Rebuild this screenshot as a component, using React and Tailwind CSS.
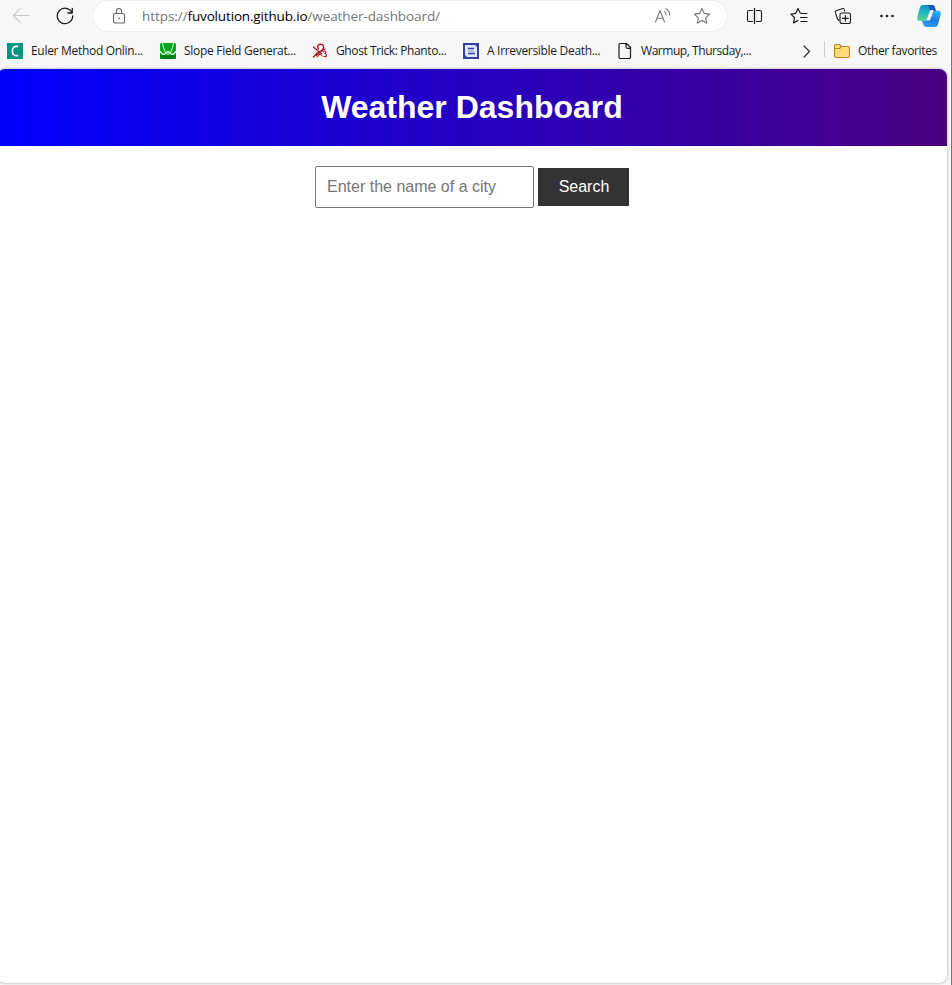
import React from "react";

const UI = "font-['Open_Sans','Noto_Sans',sans-serif]";

function Icon({ className = "", children, w = 20, h = 20 }) {
  return (
    <svg
      className={`shrink-0 ${className}`}
      width={w}
      height={h}
      viewBox={`0 0 ${w} ${h}`}
      fill="none"
      stroke="currentColor"
      strokeWidth="1.1"
      strokeLinecap="round"
      strokeLinejoin="round"
    >
      {children}
    </svg>
  );
}

function AddressBar() {
  return (
    <div className="ml-[18px] flex h-[30px] w-[634px] shrink-0 items-center rounded-full bg-white shadow-[0_0_2px_rgba(0,0,0,0.12)]">
      <Icon className="ml-4 text-[#666]">
        <path d="M6 7.500h8a1.500 1.500 0 0 1 1.500 1.500v6.500A1.500 1.500 0 0 1 14 17H6a1.500 1.500 0 0 1-1.500-1.500V9A1.500 1.500 0 0 1 6 7.500ZM7.500 7.500V5a2.500 2.500 0 0 1 5 0v2.500" />
        <circle cx="10" cy="12.3" r="0.9" fill="currentColor" stroke="none" />
      </Icon>
      <div className={`ml-[13px] w-[299px] whitespace-nowrap text-[13.5px] leading-5 text-[#767676] ${UI}`}>
        <span className="tracking-[-0.06px]">https://</span>
        <span className="tracking-[-0.16px] text-black">fuvolution.github.io</span>
        <span className="tracking-[-0.08px]">/weather-dashboard/</span>
      </div>
      <Icon className="ml-[212px] text-[#777]">
        <path d="M2.500 16 7 4.500 11.500 16M4 12.200h6M11.500 5.600c1 .7 1.600 1.900 1.500 3.400M13 2.700c2.300 1.200 3.600 3.400 3.600 6.300" />
      </Icon>
      <Icon className="ml-[19px] text-[#777]">
        <path d="m10 2.500 2.300 4.900 5.300.7-3.900 3.700 1 5.300-4.700-2.600-4.700 2.600 1-5.300-3.900-3.700 5.300-.7z" />
      </Icon>
    </div>
  );
}

function Copilot() {
  return (
    <svg className="ml-[19px] shrink-0" width="26" height="26" viewBox="0 0 26 26">
      <defs>
        <linearGradient id="cpLeft" x1="0.5" y1="0" x2="0.35" y2="1">
          <stop offset="0" stopColor="#1687c9" />
          <stop offset="0.45" stopColor="#20b4c0" />
          <stop offset="1" stopColor="#58d68c" />
        </linearGradient>
        <linearGradient id="cpRight" x1="0.7" y1="0" x2="0.3" y2="1">
          <stop offset="0" stopColor="#24b8f2" />
          <stop offset="0.5" stopColor="#2478e6" />
          <stop offset="1" stopColor="#2d9cf4" />
        </linearGradient>
      </defs>
      <path d="M7.500 2H16c1.500 0 2.300.9 2.800 2.200l1.200 3.600h-3.800c-1.600 0-2.500.8-3 2.300l-2.200 5.700c-.5 1.400-1.300 2.200-3 2.200H4.200C1.700 18 .7 16.500 1.200 14.400L3.700 5.200C4.300 3 5.500 2 7.500 2Z" fill="url(#cpLeft)" />
      <path d="M11 2h5c1.500 0 2.300.9 2.800 2.200L20 7.800h-3.600c-1.600 0-2.500-.8-3-2.200C12.900 3.200 12.300 2 11 2Z" fill="#1558b5" />
      <path d="M6 18h2c1.600 0 2.500-.8 3-2.200l2.200-5.700c.5-1.500 1.400-2.300 3-2.300h5.600c2.400 0 3.400 1.500 2.900 3.600l-2.500 9.400c-.6 2.200-1.900 3.200-3.900 3.200h-8c-1.500 0-2.300-.8-2.800-2.200Z" fill="url(#cpRight)" />
      <path d="m11 16 2.700-7.500c.4-1 1-1.400 2-1.400h.8c.6 0 .9.600.7 1.300l-2.700 7.600c-.4 1.100-1 1.600-2 1.600h-.8c-.8 0-1-.7-.7-1.600Z" fill="#f7f7f7" />
    </svg>
  );
}

function Toolbar() {
  return (
    <div className="flex h-8 items-center pl-[11px] text-[#1b1b1b]">
      <Icon className="text-[#c9c9c9]">
        <path d="M17.700 9.500H2.500M9.200 2.700 2.300 9.500l6.900 6.800" />
      </Icon>
      <Icon className="ml-6">
        <path d="M16.900 6.500A7.700 7.700 0 1 0 17.700 10M17.300 2.500v4.500h-4.500" strokeWidth="1.300" />
      </Icon>
      <AddressBar />
      <Icon className="ml-[17px]">
        <path d="M8.500 4.500H5A1.500 1.500 0 0 0 3.500 6v8A1.500 1.500 0 0 0 5 15.500h3.500M12.500 4.500H16A1.500 1.500 0 0 1 17.500 6v8a1.500 1.500 0 0 1-1.500 1.500h-3.500" />
        <path d="M10.500 2.500v15" strokeWidth="1.300" />
      </Icon>
      <Icon className="ml-[25px]">
        <path d="M13 7.500 11.200 7 9 2.500 6.800 7.300l-4.900.8 3.600 3.600-.9 5.200L9 14.500M12.500 7.500H18M11.500 11.500H18M12 15.500h6" strokeWidth="1.200" />
      </Icon>
      <Icon className="ml-6">
        <path d="M6 14.500 4.500 13 2.300 6.200c-.2-.7.100-1.300.8-1.500l6.500-2.100c.8-.3 1.400.1 1.600.8l.6 1.800" />
        <path d="M9 7h6.500a2 2 0 0 1 2 2v6.500a2 2 0 0 1-2 2H9a2 2 0 0 1-2-2V9a2 2 0 0 1 2-2ZM12.400 9.500v5.800M9.500 12.400h5.800" />
      </Icon>
      <Icon className="ml-6">
        <g fill="currentColor" stroke="none">
          <circle cx="4.500" cy="10" r="1.300" />
          <circle cx="10" cy="10" r="1.300" />
          <circle cx="15.500" cy="10" r="1.300" />
        </g>
      </Icon>
      <Copilot />
    </div>
  );
}

function Bookmark({ icon, label, className, tracking }) {
  return (
    <div className={`flex h-5 shrink-0 items-center gap-2 ${className}`}>
      {icon}
      <span className={`whitespace-nowrap ${tracking}`}>{label}</span>
    </div>
  );
}

function Bookmarks() {
  return (
    <div className={`flex h-[37px] items-center pl-[7px] text-[12px] leading-4 text-[#1b1b1b] ${UI}`}>
      <Bookmark
        className="w-[153px]"
        tracking="tracking-[-0.3px]"
        label="Euler Method Onlin..."
        icon={
          <Icon w={16} h={16}>
            <path d="M0 0h16v16H0z" fill="#069482" stroke="none" />
            <path d="M11.200 3.500C7.500 2.600 5.300 4.600 5.300 8s2.200 5.400 5.900 4.500" stroke="#fff" strokeWidth="1.700" strokeLinecap="butt" />
          </Icon>
        }
      />
      <Bookmark
        className="w-[152px]"
        tracking="tracking-[-0.29px]"
        label="Slope Field Generat..."
        icon={
          <Icon w={16} h={16}>
            <path d="M1 0h14l1 1v14l-1 1H1l-1-1V1z" fill="#00a41b" stroke="none" />
            <path d="M0 12h16v3l-1 1H1l-1-1z" fill="#078019" stroke="none" />
            <path d="M2.500.5C4 7 5.500 11.500 8 11.500S12 7 13.500.5" stroke="#c9f5cd" strokeWidth="1.100" />
            <path d="M.3 8.500C1.800 11.500 3.800 12 5.200 10.500L8 8.500l2.800 2c1.400 1.500 3.400 1 4.900-2" stroke="#e9ffea" strokeWidth="1.300" />
          </Icon>
        }
      />
      <Bookmark
        className="w-[151px]"
        tracking="tracking-[-0.39px]"
        label="Ghost Trick: Phanto..."
        icon={
          <Icon w={16} h={16} className="text-[#a3191e]">
            <path d="M6.500 6C4.500 3.500 6 1.200 8.700 1.200S12.500 4 11 6L9.500 8" strokeWidth="1.400" />
            <path d="m1.500 4 4.500 4 3.500 2.500M13 6 9 8 5 10l-3.500 4M4.500 12.500 8 9.500" strokeWidth="1.300" />
            <path d="M5.500 14 8 11l2.500 2" strokeWidth="1" />
            <path d="M11 8.500c2.500-1.500 4 .8 2 2 2.500.8 2 3.500-1 3" strokeWidth="1.100" />
          </Icon>
        }
      />
      <Bookmark
        className="w-[154px]"
        tracking="tracking-[-0.31px]"
        label="A Irreversible Death..."
        icon={
          <Icon w={16} h={16}>
            <path d="M0 0h16v16H0z" fill="#3042a3" stroke="none" />
            <path d="M2 2h10l2 2v10H4l-2-2z" fill="#e1e7fa" stroke="none" />
            <path d="M5 5.500h6M5 10.500h7" stroke="#3042a3" strokeWidth="1.700" strokeLinecap="butt" />
            <path d="M5 8h6" stroke="#8b98d5" strokeWidth="1" strokeLinecap="butt" />
          </Icon>
        }
      />
      <Bookmark
        className="w-[180px]"
        tracking="tracking-[-0.45px]"
        label="Warmup, Thursday,..."
        icon={
          <Icon w={16} h={16}>
            <path d="M3.500.5h6l4 4v9.500c0 1-.5 1.500-1.500 1.500H3.500c-1 0-1.500-.5-1.500-1.500V2c0-1 .5-1.500 1.500-1.500ZM9 .8v3c0 1 .5 1.500 1.500 1.500h2.800" strokeWidth="1.200" />
          </Icon>
        }
      />
      <Icon w={20} h={20} className="text-[#333]">
        <path d="m7 5 5.500 5.500L7 16" strokeWidth="1.300" />
      </Icon>
      <div className="mb-1 ml-[7px] mr-[9px] h-4 w-px bg-[#cfcfcf]" />
      <Bookmark
        className=""
        tracking="tracking-[-0.36px]"
        label="Other favorites"
        icon={
          <Icon w={16} h={16}>
            <path d="M2 1.500h3.500L7.500 3.500H14c1 0 1.500.5 1.500 1.500v8c0 1-.5 1.500-1.500 1.500H2c-1 0-1.500-.5-1.500-1.500V3c0-1 .5-1.500 1.500-1.500Z" fill="#ffdc78" stroke="#bb8714" />
            <path d="M.5 5.500h5l2-2" stroke="#bb8714" />
          </Icon>
        }
      />
    </div>
  );
}

export default function App() {
  return (
    <div className="h-[985px] w-[952px] overflow-hidden border-r border-[#757575] bg-[#f7f7f7]">
      <Toolbar />
      <Bookmarks />
      <main className="-ml-[3px] h-[914px] w-[950px] overflow-hidden rounded-lg bg-white font-['Liberation_Sans',Arial,sans-serif] shadow-[0_0_3px_rgba(0,0,0,0.35)]">
        <header className="flex h-[77px] items-start justify-center bg-[linear-gradient(to_right,#0000ff,#4b0082)] pt-5 text-white">
          <h1 className="text-[32px] leading-9 font-bold">Weather Dashboard</h1>
        </header>
        <div className="flex items-center justify-center gap-1 pt-5">
          <input
            className="h-[42px] w-[219px] rounded-[2px] border border-[#767676] bg-white px-[11px] text-base text-black outline-none placeholder:text-[#757575]"
            placeholder="Enter the name of a city"
          />
          <button className="h-[38px] w-[91px] bg-[#333] pl-px text-base text-white">Search</button>
        </div>
      </main>
    </div>
  );
}
